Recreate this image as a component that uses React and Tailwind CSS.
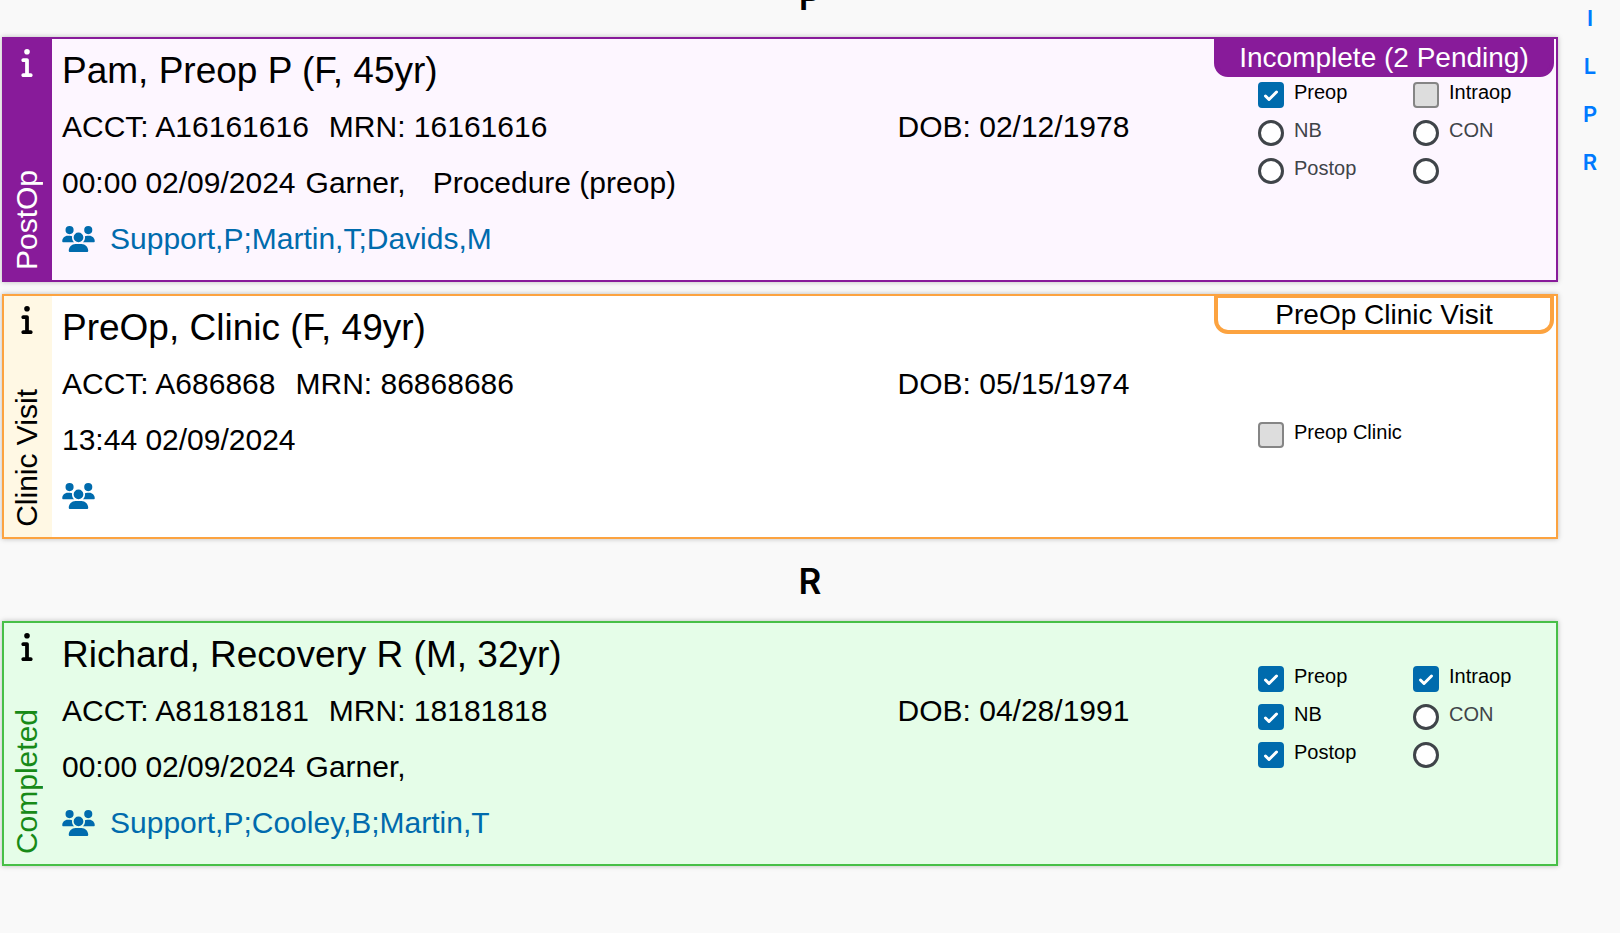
import { useState } from "react";
import { FaInfo, FaUsers } from "react-icons/fa6";

const sections = [
  {
    letter: "P",
    patients: [
      {
        id: "pam",
        name: "Pam, Preop P (F, 45yr)",
        acct: "A16161616",
        mrn: "16161616",
        dob: "02/12/1978",
        time: "00:00 02/09/2024",
        surgeon: "Garner,",
        procedure: "Procedure (preop)",
        team: "Support,P;Martin,T;Davids,M",
        status: "PostOp",
        badge: "Incomplete (2 Pending)",
        theme: "postop",
        forms: [
          { label: "Preop", state: "done" },
          { label: "Intraop", state: "pending" },
          { label: "NB", state: "none" },
          { label: "CON", state: "none" },
          { label: "Postop", state: "none" },
          { label: "", state: "none" },
        ],
      },
      {
        id: "clinic",
        name: "PreOp, Clinic (F, 49yr)",
        acct: "A686868",
        mrn: "86868686",
        dob: "05/15/1974",
        time: "13:44 02/09/2024",
        status: "Clinic Visit",
        badge: "PreOp Clinic Visit",
        theme: "clinic",
        forms: [{ label: "Preop Clinic", state: "pending" }],
      },
    ],
  },
  {
    letter: "R",
    patients: [
      {
        id: "richard",
        name: "Richard, Recovery R (M, 32yr)",
        acct: "A81818181",
        mrn: "18181818",
        dob: "04/28/1991",
        time: "00:00 02/09/2024",
        surgeon: "Garner,",
        team: "Support,P;Cooley,B;Martin,T",
        status: "Completed",
        theme: "completed",
        forms: [
          { label: "Preop", state: "done" },
          { label: "Intraop", state: "done" },
          { label: "NB", state: "done" },
          { label: "CON", state: "none" },
          { label: "Postop", state: "done" },
          { label: "", state: "none" },
        ],
      },
    ],
  },
];

const themes = {
  postop: {
    card: "border-[#881b9a] bg-[#fdf6ff]",
    rail: "bg-[#881b9a]",
    info: "text-white",
    status: "text-white",
    badge: "border-[#881b9a] bg-[#881b9a] text-white",
  },
  clinic: {
    card: "border-[#fca340] bg-white",
    rail: "bg-[#fff8e4]",
    info: "text-black",
    status: "text-black",
    badge: "border-[#fca340] bg-white text-black",
  },
  completed: {
    card: "border-[#47bf47] bg-[#e5fde8]",
    rail: "bg-[#e5fde8]",
    info: "text-black",
    status: "text-[#178a17]",
    badge: "",
  },
};

function FormOption({ form, id }) {
  const [checked, setChecked] = useState(form.state === "done");

  if (form.state === "none") {
    return (
      <label htmlFor={id} className="flex h-[26px] items-start gap-[10px] text-[#3f4449]">
        <input
          id={id}
          type="radio"
          aria-label={form.label || "Other"}
          className="size-[26px] shrink-0 appearance-none rounded-full border-3 border-[#3f4449] bg-white checked:bg-[#006bad]"
        />
        <span>{form.label}</span>
      </label>
    );
  }

  return (
    <label htmlFor={id} className="relative flex h-[26px] items-start gap-[10px] text-black">
      <input
        id={id}
        type="checkbox"
        checked={checked}
        onChange={(e) => setChecked(e.target.checked)}
        className="size-[26px] shrink-0 appearance-none rounded border-2 border-[#858585] bg-[#dddddd] checked:border-[#006bad] checked:bg-[#006bad]"
      />
      {checked && (
        <svg
          viewBox="0 0 26 26"
          className="pointer-events-none absolute top-0 left-0 size-[26px]"
          fill="none"
          stroke="white"
          strokeWidth="3"
          strokeLinecap="round"
          strokeLinejoin="round"
        >
          <path d="M7.5 14l3.5 3.5 7.5-7.5" />
        </svg>
      )}
      <span>{form.label}</span>
    </label>
  );
}

function PatientCard({ patient }) {
  const theme = themes[patient.theme];
  const single = patient.forms.length === 1;

  return (
    <article className={`flex border-2 shadow-[0_0_5px_rgba(0,0,0,0.25)] ${theme.card}`}>
      <div className={`flex w-12 shrink-0 flex-col items-center justify-between pt-2 pr-[2px] pb-[10px] ${theme.rail}`}>
        <button type="button" aria-label="Patient info" className={theme.info}>
          <FaInfo className="size-[30px]" />
        </button>
        <span className={`rotate-180 text-[30px] leading-9 [writing-mode:vertical-rl] ${theme.status}`}>
          {patient.status}
        </span>
      </div>

      <div className="flex-1 pt-[3px] pb-[13px] pl-[10px] text-[30px] leading-[56px]">
        <h3 className="text-[37px] leading-[57px]">{patient.name}</h3>
        <div className="flex">
          <p className="flex flex-[837] gap-5">
            <span>ACCT: {patient.acct}</span>
            <span>MRN: {patient.mrn}</span>
          </p>
          <p className="flex-[317]">DOB: {patient.dob}</p>
        </div>
        <p className="flex">
          <span className="mr-[10px]">{patient.time}</span>
          <span className="mr-[27px]">{patient.surgeon}</span>
          <span>{patient.procedure}</span>
        </p>
        <a href="#team" className="flex h-14 items-center gap-[15px] text-[#006bad]">
          <FaUsers className="h-[26px] w-[33px]" />
          <span>{patient.team}</span>
        </a>
      </div>

      <div className="mr-[2px] flex w-[340px] shrink-0 flex-col pb-[2px]">
        {patient.badge && (
          <div
            className={`-mt-[2px] h-10 rounded-b-[14px] border-4 text-center text-[28px] leading-[34px] ${theme.badge}`}
          >
            {patient.badge}
          </div>
        )}
        <div
          className={`grid grid-cols-[155px_1fr] gap-y-3 pl-11 text-xl leading-5 ${
            single ? "my-auto" : patient.badge ? "pt-[5px]" : "pt-[43px]"
          }`}
        >
          {patient.forms.map((form, i) => (
            <FormOption key={i} form={form} id={`${patient.id}-${i}`} />
          ))}
        </div>
      </div>
    </article>
  );
}

function App() {
  return (
    <div className="flex min-h-screen items-start overflow-hidden bg-[#f9f9f9] font-['Liberation_Sans',Arial,sans-serif] text-black">
      <main className="-mt-[45px] min-w-0 flex-1 pl-[2px]">
        {sections.map((section) => (
          <section key={section.letter} id={section.letter}>
            <h2 className="pt-[21px] pb-[19px] pl-[60px] text-center font-['Inter',sans-serif] text-[35px] leading-[42px] font-semibold">
              {section.letter}
            </h2>
            <div className="flex flex-col gap-3">
              {section.patients.map((patient) => (
                <PatientCard key={patient.id} patient={patient} />
              ))}
            </div>
          </section>
        ))}
      </main>

      <nav className="flex w-[62px] shrink-0 flex-col items-center pt-1 pl-[2px] font-['Inter',sans-serif] text-[22px] leading-7 font-semibold text-[#007aff]">
        {["I", "L", "P", "R"].map((letter) => (
          <a key={letter} href={`#${letter}`} className="mb-5">
            {letter}
          </a>
        ))}
      </nav>
    </div>
  );
}

export default App;
